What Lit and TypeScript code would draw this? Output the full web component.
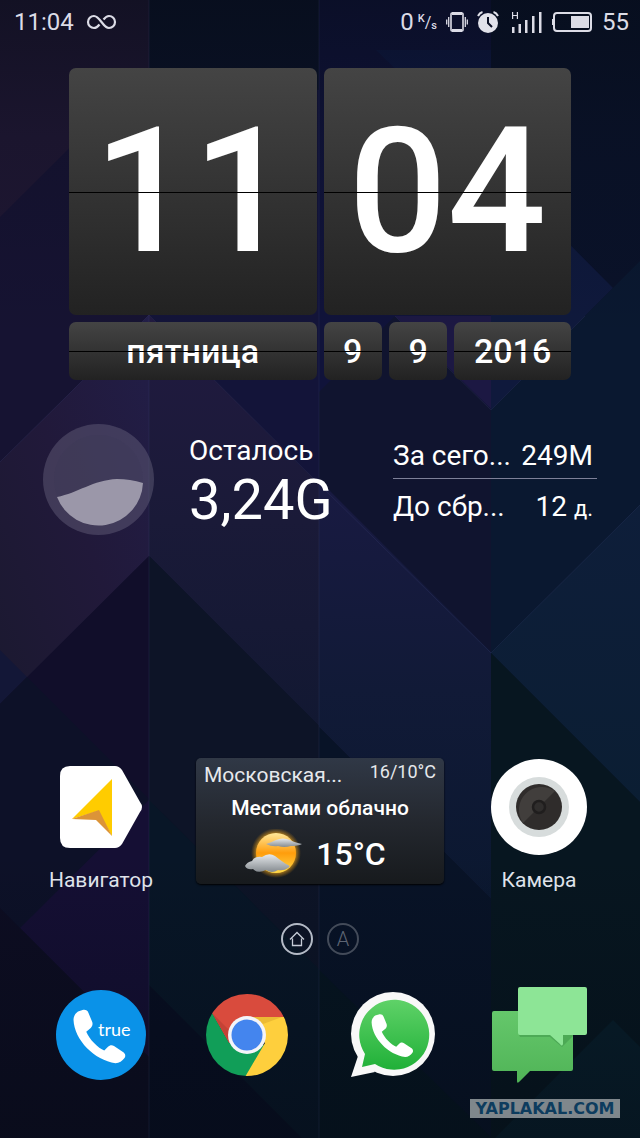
import { LitElement, html, svg, css } from 'lit';
import { customElement, property } from 'lit/decorators.js';

const wallpaper = svg`
  <svg class="wallpaper" viewBox="0 0 640 1138" preserveAspectRatio="none" aria-hidden="true">
    <defs>
      <linearGradient id="shade" x1="0" y1="0" x2="0" y2="1">
        <stop offset="0" stop-color="#040a12" stop-opacity="0.45" />
        <stop offset="0.12" stop-color="#040a12" stop-opacity="0.15" />
        <stop offset="0.3" stop-color="#040a12" stop-opacity="0" />
        <stop offset="0.75" stop-color="#040a12" stop-opacity="0" />
        <stop offset="1" stop-color="#040a12" stop-opacity="0.4" />
      </linearGradient>
      <linearGradient id="band1" x1="0" y1="1" x2="1" y2="0">
        <stop offset="0" stop-color="#1b1930" />
        <stop offset="0.5" stop-color="#21193a" />
        <stop offset="1" stop-color="#221e48" />
      </linearGradient>
      <linearGradient id="band2" x1="0" y1="0" x2="0" y2="1">
        <stop offset="0" stop-color="#211a40" />
        <stop offset="0.5" stop-color="#1a1a38" />
        <stop offset="1" stop-color="#121832" />
      </linearGradient>
      <linearGradient id="band3" x1="0" y1="0" x2="0" y2="1">
        <stop offset="0" stop-color="#191a42" />
        <stop offset="0.5" stop-color="#111a37" />
        <stop offset="1" stop-color="#0b1830" />
      </linearGradient>
      <linearGradient id="band4" x1="0" y1="0" x2="0" y2="1">
        <stop offset="0" stop-color="#0e1e3a" />
        <stop offset="1" stop-color="#0b1e33" />
      </linearGradient>
    </defs>
    <path fill="#161332" d="M0 0H150V1138H0z" />
    <path fill="#1f1733" d="M0 0H149V69L0 217z" />
    <path fill="url(#band1)" d="M0 462L149 315V556L0 704z" />
    <path fill="#131737" d="M0 650L27 677L0 704z" />
    <path fill="#110e2a" d="M0 704L149 556V1138H0z" />
    <path fill="#0d1128" d="M0 704L27 677L149 799V800L0 949z" />
    <path fill="#150f34" d="M149 800V1057L20 928z" />
    <path fill="#0d0d22" d="M0 908L149 1057V1138H0z" />

    <path fill="#131439" d="M149 0H320V485L149 315z" />
    <path fill="#0b1228" d="M149 0H320V90L149 69z" />
    <path fill="url(#band2)" d="M149 315L320 485V727L149 556z" />
    <path fill="#0d1427" d="M149 556L320 727V1138H149z" />
    <path fill="#081627" d="M149 800L320 970V1138H149z" />
    <path fill="#080e22" d="M149 985L302 1138H149z" />

    <path fill="#10133a" d="M319 0H492V653L319 480z" />
    <path fill="#0f1842" d="M376 50H492V165z" />
    <path fill="#1c1843" d="M395 316H492V410z" />
    <path fill="#10142f" d="M395 316L492 410V653L319 480V392z" />
    <path fill="url(#band3)" d="M319 480L492 653V900L319 727z" />
    <path fill="#081327" d="M319 727L492 900V1138H319z" />
    <path fill="#061521" d="M319 970L492 1138H319z" />

    <path fill="#0a1229" d="M491 0H640V1138H491z" />
    <path fill="#0f193c" d="M491 165L613 288L491 410z" />
    <path fill="#0a1830" d="M491 410L640 261V513L491 653z" />
    <path fill="url(#band4)" d="M491 653L640 505V802z" />
    <path fill="#071620" d="M491 653L640 802V1138H491z" />
    <path fill="#081e2b" d="M613 1020L640 1047V1138H495z" />

    <path fill="url(#shade)" d="M0 0H640V1138H0z" />
    <path stroke="#5a64a0" stroke-opacity="0.14" fill="none" d="M0 462L149 315L320 485L491 653L640 505M149 0V1138M319 0V1138M395 316L491 410L585 316" />
  </svg>
`;

const handset =
  'M12 6C9 8 6 12 6 17C7 44 34 71 62 75C67 75 71 72 74 68C76 65 75 62 72 60L60 52C57 50 54 51 52 53L47 58C39 55 27 43 23 33L29 28C31 26 32 23 31 20L26 8C25 4 21 3 18 4z';

const icons = {
  infinity: svg`
    <svg width="34" height="18" viewBox="-4 0 34 18" fill="none" stroke="#dcdce6" stroke-width="2.200">
      <path d="M12.500 11.500C10.500 14 9 15 7 15A6 6 0 0 1 7 3C13 3 16 15 22 15A6 6 0 0 0 22 3C20 3 18.500 4 16.500 6.500" />
    </svg>`,
  vibrate: svg`
    <svg width="22" height="22" viewBox="0 0 22 22" fill="none" stroke="#dcdce6">
      <rect x="5" y="2" width="12" height="18" rx="1" stroke-width="1.600" />
      <path stroke-width="3" d="M6 2.500H16M6 19.500H16" />
      <path stroke-width="1.300" d="M2.700 6V16M19.300 6V16M.7 8.500V13.500M21.300 8.500V13.500" />
    </svg>`,
  alarm: svg`
    <svg width="22" height="22" viewBox="0 0 22 22">
      <circle cx="11" cy="12" r="10" fill="#e2e2ea" />
      <path stroke="#e2e2ea" stroke-width="2" fill="none" d="M1 5C2 3 3.500 1.500 5.500 1M21 5C20 3 18.500 1.500 16.500 1" />
      <path stroke="#0b0f24" stroke-width="2" fill="none" d="M11 6V12L15 16" />
    </svg>`,
  signal: svg`
    <svg width="34" height="22" viewBox="-4 0 34 22" fill="#dcdce6">
      <path d="M0 16h2.500v6h-2.500zM6.500 13h2.500v9h-2.500zM13 9h2.500v13h-2.500zM20 5h2.500v17h-2.500zM27 1h2.500v21h-2.500z" />
      <path fill="none" stroke="#dcdce6" stroke-width="1.200" d="M.6 1V8M5.400 1V8M0 4.500H5" />
    </svg>`,
  battery: svg`
    <svg width="42" height="20" viewBox="0 0 42 20">
      <rect x="3" y="1" width="37" height="18" rx="3" fill="none" stroke="#dcdce6" stroke-width="2" />
      <path fill="#dcdce6" d="M1 7h2v6h-2zM20 4h18v12h-18z" />
    </svg>`,
  navigator: svg`
    <svg width="82" height="82" viewBox="0 0 82 82">
      <path fill="#fff" d="M10 0H55Q59 0 62 4L80 36Q84 41 80 46L62 78Q59 82 55 82H10Q0 82 0 72V10Q0 0 10 0z" />
      <path fill="#fc0" d="M52 13L12 53L38 45L52 70z" />
      <path fill="#dc9438" d="M12 53L39 44L52 70L36 54z" />
    </svg>`,
  camera: svg`
    <svg width="96" height="96" viewBox="0 0 96 96">
      <circle cx="48" cy="48" r="48" fill="#fff" />
      <circle cx="48" cy="48" r="30" fill="#d7dcdc" />
      <circle cx="48" cy="48" r="23" fill="#2f2c2b" />
      <path fill="#413e3c" d="M32 64A23 23 0 0 1 64 32z" />
      <circle cx="48" cy="48" r="6" fill="#302e2d" stroke="#201e1e" stroke-width="2.500" />
    </svg>`,
  truecaller: svg`
    <svg width="90" height="90" viewBox="0 0 90 90">
      <circle cx="45" cy="45" r="45" fill="#0a92e8" />
      <path fill="#fff" transform="translate(13 17) scale(.75)" d="${handset}" />
      <text x="42" y="46" fill="#fff" font-family="Lato, sans-serif" font-size="18">true</text>
    </svg>`,
  chrome: svg`
    <svg width="84" height="84" viewBox="0 0 84 84">
      <defs>
        <clipPath id="disc"><circle cx="42" cy="42" r="41" /></clipPath>
      </defs>
      <g clip-path="url(#disc)">
        <path fill="#d94b3d" d="M0 0H84V24H42L26 54L6 19z" />
        <path fill="#119e58" d="M7 20L24 50L60 52L38 90H0V20z" />
        <path fill="#fecf3d" d="M42 24H84V84H40L60 50z" />
        <path fill="#b23a30" fill-opacity="0.5" d="M7 20L24 49L25 38z" />
        <path fill="#d9a52c" fill-opacity="0.5" d="M42 24H77L58 31z" />
      </g>
      <circle cx="42" cy="42" r="19" fill="#f4f4f8" />
      <circle cx="42" cy="42" r="15.500" fill="#4485ee" />
    </svg>`,
  whatsapp: svg`
    <svg width="84" height="86" viewBox="0 0 84 86">
      <defs>
        <linearGradient id="wa" x1="0" y1="0" x2="0" y2="1">
          <stop offset="0" stop-color="#5fd268" />
          <stop offset="1" stop-color="#20b038" />
        </linearGradient>
      </defs>
      <circle cx="42" cy="42" r="42" fill="#f8f8f8" />
      <path fill="#f8f8f8" d="M0 85L9 58L24 80z" />
      <path fill="url(#wa)" d="M11 75L14 62A35 35 0 1 1 24 72z" />
      <path fill="#fff" transform="translate(17 20) scale(.6)" d="${handset}" />
    </svg>`,
  messages: svg`
    <svg width="95" height="97" viewBox="0 0 95 97">
      <defs>
        <linearGradient id="msg" x1="0" y1="0" x2="0" y2="1">
          <stop offset="0" stop-color="#65c76b" />
          <stop offset="1" stop-color="#50b457" />
        </linearGradient>
      </defs>
      <path fill="url(#msg)" d="M2 24H79Q81 24 81 26V82Q81 84 79 84H38L27 95Q25 97 25 94V84H2Q0 84 0 82V26Q0 24 2 24z" />
      <path fill="#40984a" fill-opacity="0.55" d="M27 48H81V49L70 60L58 50H28z" />
      <path fill="#8de596" d="M28 0H93Q95 0 95 2V46Q95 48 93 48H71V57Q70 60 68 57L58 48H28Q26 48 26 46V2Q26 0 28 0z" />
    </svg>`,
  weather: svg`
    <svg width="60" height="50" viewBox="0 0 60 50">
      <defs>
        <radialGradient id="halo">
          <stop offset="0.7" stop-color="#ffb31a" stop-opacity="0.9" />
          <stop offset="1" stop-color="#c88312" stop-opacity="0" />
        </radialGradient>
        <linearGradient id="sun" x1="0" y1="0" x2="0" y2="1">
          <stop offset="0" stop-color="#ffe89a" />
          <stop offset="0.5" stop-color="#ff9d0c" />
          <stop offset="1" stop-color="#ffd94a" />
        </linearGradient>
        <linearGradient id="cloud" x1="0" y1="0" x2="0" y2="1">
          <stop offset="0" stop-color="#e6e9ec" />
          <stop offset="1" stop-color="#858b90" />
        </linearGradient>
      </defs>
      <circle cx="32" cy="24" r="25" fill="url(#halo)" />
      <circle cx="32" cy="24" r="20" fill="url(#sun)" />
      <path fill="url(#cloud)" d="M22 15Q28 13 32 11Q39 8 46 11Q49 13 58 15Q54 17 47 17Q40 19 34 17Q28 18 22 15z" />
      <path fill="url(#cloud)" d="M1 37Q3 33 8 32Q10 27 18 28Q25 23 31 27Q36 31 42 35Q48 37 44 39Q40 42 34 41Q28 45 22 41Q14 45 9 40Q3 41 1 37z" />
    </svg>`,
  home: svg`
    <svg width="16" height="16" viewBox="0 0 16 16" fill="none" stroke="#c6cbd6" stroke-width="1.300">
      <path d="M3.500 7.500V14.500H12.500V7.500M1 8.500L8 1.500L15 8.500" />
    </svg>`,
};

@customElement('flip-card')
export class FlipCard extends LitElement {
  @property() value = '';

  render() {
    return html`<div class="card">${this.value}</div>`;
  }

  static styles = css`
    :host {
      display: grid;
    }

    .card {
      position: relative;
      display: grid;
      place-items: center;
      border-radius: 7px;
      background: linear-gradient(#444, #222);
      color: #fff;
    }

    .card::after {
      content: '';
      position: absolute;
      left: 0;
      right: 0;
      top: 50%;
      height: 1px;
      background: #000;
    }
  `;
}

@customElement('app-icon')
export class AppIcon extends LitElement {
  @property() name = '';
  @property() label = '';
  @property({ type: Boolean }) captioned = false;

  render() {
    return html`
      <a class="app" href="#${this.name}" aria-label=${this.label}>
        <span class="picture">${icons[this.name as keyof typeof icons]}</span>
        ${this.captioned ? html`<span class="caption">${this.label}</span>` : ''}
      </a>
    `;
  }

  static styles = css`
    :host {
      display: block;
    }

    .app {
      display: flex;
      flex-direction: column;
      align-items: center;
      gap: 8px;
      color: #dfe2ea;
      text-decoration: none;
    }

    .picture {
      display: grid;
      place-items: center;
      height: 98px;
    }

    .caption {
      font-size: 21px;
      line-height: 32px;
      white-space: nowrap;
    }
  `;
}

@customElement('app-root')
export class AppRoot extends LitElement {
  render() {
    return html`
      ${wallpaper}
      <header class="status">
        <time>11:04</time>
        ${icons.infinity}
        <span class="grow"></span>
        <span class="speed">0<span class="unit"><sup>K</sup>/<sub>s</sub></span></span>
        ${icons.vibrate} ${icons.alarm} ${icons.signal} ${icons.battery}
        <span>55</span>
      </header>

      <section class="clock">
        <flip-card class="digits" value="11"></flip-card>
        <flip-card class="digits" value="04"></flip-card>
        <flip-card class="date" value="пятница"></flip-card>
        <div class="numbers">
          <flip-card class="date" value="9"></flip-card>
          <flip-card class="date" value="9"></flip-card>
          <flip-card class="date" value="2016"></flip-card>
        </div>
      </section>

      <section class="traffic">
        <svg class="gauge" viewBox="0 0 111 111" aria-hidden="true">
          <circle cx="55.500" cy="55.500" r="55.500" fill="#6d6a84" fill-opacity="0.42" />
          <circle cx="55.500" cy="55.500" r="44.500" fill="#34304f" fill-opacity="0.1" />
          <path fill="#a3a0b0" fill-opacity="0.92" d="M14 73C35 69 50 56 74 55Q87 55 100 59A44.500 44.500 0 0 1 14 73z" />
        </svg>
        <div class="left">
          <div class="title">Осталось</div>
          <div class="amount">3,24G</div>
        </div>
        <dl class="stats">
          <div class="stat"><dt>За сего...</dt><dd>249M</dd></div>
          <div class="stat"><dt>До сбр...</dt><dd>12 <small>д.</small></dd></div>
        </dl>
      </section>

      <main class="apps">
        <app-icon name="navigator" label="Навигатор" captioned></app-icon>
        <section class="weather">
          <div class="place"><span>Московская...</span><span class="range">16/10°C</span></div>
          <div class="sky">Местами облачно</div>
          <div class="now">${icons.weather}<span>15°C</span></div>
        </section>
        <app-icon name="camera" label="Камера" captioned></app-icon>
      </main>

      <nav class="pages">
        <button class="page current" aria-label="Home">${icons.home}</button>
        <button class="page">A</button>
      </nav>

      <footer class="dock">
        <app-icon name="truecaller" label="Truecaller"></app-icon>
        <app-icon name="chrome" label="Chrome"></app-icon>
        <app-icon name="whatsapp" label="WhatsApp"></app-icon>
        <app-icon name="messages" label="Messages"></app-icon>
      </footer>

      <div class="watermark">YAPLAKAL.COM</div>
    `;
  }

  static styles = css`
    :host {
      position: relative;
      z-index: 0;
      display: flex;
      flex-direction: column;
      min-height: 100vh;
      box-sizing: border-box;
      padding-bottom: 54px;
      overflow: hidden;
      background: #0a1024;
      color: #fff;
      font-family: Roboto, 'Liberation Sans', sans-serif;
    }

    .wallpaper {
      position: absolute;
      inset: 0;
      z-index: -1;
      width: 100%;
      height: 100%;
    }

    .status {
      display: flex;
      align-items: center;
      gap: 9px;
      height: 44px;
      padding: 0 11px 0 14px;
      color: #dcdce6;
      font-size: 24px;
    }

    .grow {
      flex: 1;
    }

    .speed {
      display: flex;
      align-items: center;
      gap: 4px;
    }

    .unit {
      display: flex;
      align-items: center;
      font-size: 16px;
    }

    .unit sup,
    .unit sub {
      font-size: 11px;
      font-weight: 500;
      line-height: 12px;
    }

    .unit sup {
      align-self: flex-start;
    }

    .unit sub {
      align-self: flex-end;
    }

    .clock {
      display: grid;
      grid-template-columns: 1fr 1fr;
      gap: 7px;
      padding: 24px 69px 0;
    }

    .digits {
      height: 247px;
      font-size: 174px;
      font-weight: 500;
      line-height: 240px;
    }

    .date {
      height: 58px;
      font-size: 34px;
      font-weight: 500;
    }

    .numbers {
      display: grid;
      grid-template-columns: 1fr 1fr 2fr;
      gap: 7px;
    }

    .traffic {
      display: flex;
      align-items: center;
      padding: 44px 43px 0;
    }

    .gauge {
      width: 111px;
      margin-right: 35px;
    }

    .title {
      font-size: 28px;
      line-height: 40px;
    }

    .amount {
      font-size: 56px;
      line-height: 58px;
    }

    .stats {
      width: 204px;
      margin: 0 0 0 auto;
      font-size: 28px;
    }

    .stat {
      display: flex;
      justify-content: space-between;
      padding: 6px 4px 0 0;
      line-height: 44px;
      white-space: nowrap;
    }

    .stat + .stat {
      border-top: 1px solid #7d8098;
    }

    .stat dd {
      margin: 0;
    }

    .stat small {
      font-size: 22px;
    }

    .apps {
      display: grid;
      grid-template-columns: 1fr 2fr 1fr;
      margin-top: auto;
      padding: 0 28px;
    }

    .weather {
      justify-self: center;
      box-sizing: border-box;
      width: 248px;
      height: 126px;
      padding: 2px 8px;
      border-radius: 5px;
      background: linear-gradient(#303846, #24282f 50%, #171a1d);
      box-shadow: 0 1px 2px #000;
    }

    .place {
      display: flex;
      justify-content: space-between;
      color: #e6e8ec;
      font-size: 21px;
      line-height: 30px;
    }

    .range {
      font-size: 18px;
      line-height: 24px;
    }

    .sky {
      font-size: 21px;
      font-weight: 500;
      line-height: 36px;
      text-align: center;
    }

    .now {
      display: flex;
      align-items: center;
      justify-content: center;
      gap: 12px;
      padding-right: 10px;
      font-size: 32px;
      font-weight: 500;
      line-height: 56px;
    }

    .pages {
      display: flex;
      justify-content: center;
      gap: 14px;
      padding: 27px 0 31px;
    }

    .page {
      display: grid;
      place-items: center;
      width: 32px;
      height: 32px;
      padding: 0;
      border: 2px solid #434b59;
      border-radius: 50%;
      background: none;
      color: #5d6573;
      font: 300 20px Roboto, sans-serif;
    }

    .current {
      border-color: #b4bac6;
    }

    .dock {
      display: grid;
      grid-template-columns: repeat(4, 1fr);
      padding: 0 28px;
    }

    .watermark {
      position: absolute;
      right: 20px;
      bottom: 20px;
      width: 150px;
      background: #7f878c;
      color: #0d3c5e;
      font: bold 16px/19px 'DejaVu Sans', sans-serif;
      text-align: center;
    }
  `;
}
